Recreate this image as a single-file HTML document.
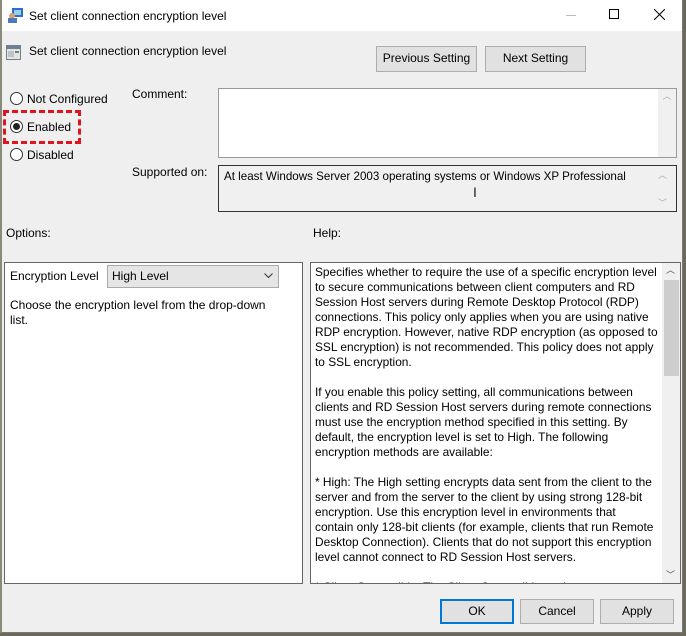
<!DOCTYPE html>
<html><head><meta charset="utf-8"><style>
*{margin:0;padding:0;box-sizing:border-box}
body{width:686px;height:636px;background:#6b6a5a;position:relative;overflow:hidden;font-family:"Liberation Sans",sans-serif;font-size:12px;color:#000}
.win{position:absolute;left:0;top:0;width:683px;height:633px;background:#efefef;border-left:2px solid #8a8a7a;border-right:1px solid #777;border-bottom:1px solid #777}
.in{position:absolute;left:-2px;top:0;width:0;height:0}
.a{position:absolute;white-space:nowrap}
.btn{position:absolute;background:#e1e1e1;border:1px solid #adadad;text-align:center;line-height:23px}
.radio{position:absolute;width:13px;height:13px;border:1px solid #333;border-radius:50%;background:#fff}
.help{position:absolute;left:308px;top:262px;width:373px;height:322px;background:#fff;border:1px solid #666;overflow:hidden}
.help .t{position:absolute;left:4px;top:2px;line-height:15px;white-space:nowrap;font-size:11.9px}
</style></head><body>
<div class="win"><div class="in">
 <div class="a" style="left:2px;top:0;width:680px;height:31px;background:#fff"></div>
 <svg class="a" style="left:7px;top:7px" width="18" height="17"><rect x="5" y="1" width="11" height="9" fill="#2a6fd0"/><rect x="7" y="3" width="7" height="5" fill="#9cd"/><circle cx="5" cy="9" r="3" fill="#d9a070"/><rect x="1" y="11" width="9" height="5" fill="#4e7bb8"/></svg>
 <div class="a" style="left:29px;top:9px">Set client connection encryption level</div>
 <div class="a" style="left:566px;top:15px;width:10px;height:1px;background:#bbb"></div>
 <div class="a" style="left:609px;top:9px;width:10px;height:10px;border:1px solid #000"></div>
 <svg class="a" style="left:654px;top:9px" width="11" height="11"><path d="M0 0L11 11M11 0L0 11" stroke="#000" stroke-width="1"/></svg>
 <svg class="a" style="left:5px;top:44px" width="17" height="17"><rect x="1" y="1" width="15" height="15" fill="#6b7f95"/><rect x="2" y="5" width="13" height="10" fill="#e8e4d8"/><rect x="3" y="7" width="6" height="6" fill="#b9c4cf"/><rect x="10" y="7" width="4" height="2" fill="#6b7f95"/></svg>
 <div class="a" style="left:29px;top:44px">Set client connection encryption level</div>
 <div class="btn" style="left:376px;top:46px;width:101px;height:26px">Previous Setting</div>
 <div class="btn" style="left:485px;top:46px;width:101px;height:26px">Next Setting</div>

 <div class="radio" style="left:10px;top:92px"></div><div class="a" style="left:27px;top:92px">Not Configured</div>
 <div class="radio" style="left:10px;top:120px"></div><div class="a" style="left:13px;top:123px;width:7px;height:7px;border-radius:50%;background:#222"></div><div class="a" style="left:27px;top:120px">Enabled</div>
 <div class="a" style="left:3px;top:110px;width:78px;height:34px;border:3px dashed #e0141e"></div>
 <div class="radio" style="left:10px;top:148px"></div><div class="a" style="left:27px;top:148px">Disabled</div>

 <div class="a" style="left:132px;top:87px">Comment:</div>
 <div class="a" style="left:218px;top:88px;width:459px;height:70px;background:#fff;border:1px solid #999"></div>
 <div class="a" style="left:658px;top:89px;width:18px;height:68px;background:#f0f0f0;color:#aaa;font-size:9px;text-align:center">︿</div>
 <div class="a" style="left:132px;top:165px">Supported on:</div>
 <div class="a" style="left:218px;top:165px;width:459px;height:47px;background:#f0f0f0;border:1px solid #333"></div>
 <div class="a" style="left:224px;top:170px;font-size:11.6px">At least Windows Server 2003 operating systems or Windows XP Professional</div>
 <div class="a" style="left:473px;top:184px;font-size:14px;color:#222">I</div>
 <div class="a" style="left:658px;top:168px;color:#aaa;font-size:9px">︿</div>
 <div class="a" style="left:658px;top:196px;color:#aaa;font-size:9px">﹀</div>

 <div class="a" style="left:6px;top:226px">Options:</div>
 <div class="a" style="left:313px;top:226px">Help:</div>

 <div class="a" style="left:4px;top:262px;width:299px;height:322px;background:#fff;border:1px solid #666"></div>
 <div class="a" style="left:10px;top:269px">Encryption Level</div>
 <div class="a" style="left:107px;top:265px;width:172px;height:23px;background:#e5e5e5;border:1px solid #aaa;padding:4px 4px;line-height:13px">High Level</div>
 <svg class="a" style="left:264px;top:273px" width="9" height="6"><path d="M0.5 0.5L4.5 4.5L8.5 0.5" stroke="#333" fill="none"/></svg>
 <div class="a" style="left:10px;top:298px;line-height:15px">Choose the encryption level from the drop-down<br>list.</div>

 <div class="help" style="left:310px;width:371px"><div class="t">Specifies whether to require the use of a specific encryption level<br>to secure communications between client computers and RD<br>Session Host servers during Remote Desktop Protocol (RDP)<br>connections. This policy only applies when you are using native<br>RDP encryption. However, native RDP encryption (as opposed to<br>SSL encryption) is not recommended. This policy does not apply<br>to SSL encryption.<br><br>If you enable this policy setting, all communications between<br>clients and RD Session Host servers during remote connections<br>must use the encryption method specified in this setting. By<br>default, the encryption level is set to High. The following<br>encryption methods are available:<br><br>* High: The High setting encrypts data sent from the client to the<br>server and from the server to the client by using strong 128-bit<br>encryption. Use this encryption level in environments that<br>contain only 128-bit clients (for example, clients that run Remote<br>Desktop Connection). Clients that do not support this encryption<br>level cannot connect to RD Session Host servers.<br><br>* Client Compatible: The Client Compatible setting encrypts</div>
  <div class="a" style="left:351px;top:0;width:19px;height:320px;background:#f0f0f0"></div>
  <div class="a" style="left:353px;top:17px;width:15px;height:96px;background:#cdcdcd"></div>
  <div class="a" style="left:355px;top:0;font-size:9px;color:#555">︿</div>
  <div class="a" style="left:355px;top:305px;font-size:9px;color:#555">﹀</div>
 </div>

 <div class="btn" style="left:440px;top:599px;width:74px;height:25px;border:2px solid #0078d7;line-height:21px">OK</div>
 <div class="btn" style="left:520px;top:599px;width:74px;height:25px">Cancel</div>
 <div class="btn" style="left:600px;top:599px;width:74px;height:25px">Apply</div>
</div></div>
</body></html>
